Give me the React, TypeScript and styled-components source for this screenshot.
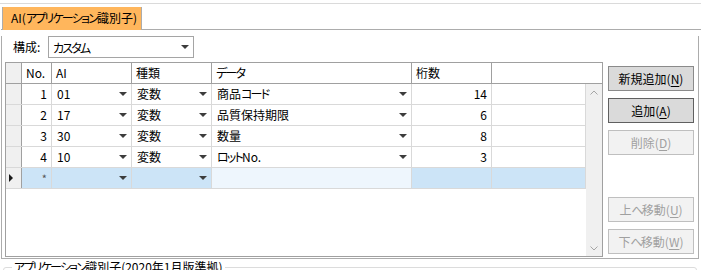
import React from "react";
import styled, { createGlobalStyle } from "styled-components";

const GlobalStyle = createGlobalStyle`
  html, body { margin: 0; padding: 0; background: #fff; }
  body {
    font-family: "Noto Sans CJK JP", "Noto Sans", sans-serif;
    font-size: 12px;
    color: #000;
    font-feature-settings: "palt";
  }
  * { box-sizing: border-box; }
`;

const Root = styled.div`
  width: 701px;
  height: 270px;
  overflow: hidden;
  background: #fff;
`;

const TopRule = styled.div`
  margin-top: 3px;
  height: 1px;
  background: #dadada;
`;

const TabStrip = styled.div`
  display: flex;
  margin-top: 3px;
  height: 23px;
  padding-left: 1px;
`;

const TabLead = styled.div`
  width: 1px;
  border-bottom: 1px solid #acacac;
`;

const Tab = styled.div`
  width: 140px;
  height: 23px;
  background: #ffb65c;
  border-left: 1px solid #acacac;
  border-right: 1px solid #acacac;
  padding-left: 8px;
  line-height: 22px;
  white-space: nowrap;
`;

const TabFill = styled.div`
  flex: 1;
  border-bottom: 1px solid #acacac;
`;

const Panel = styled.div`
  margin-left: 1px;
  width: 698px;
  border-left: 1px solid #acacac;
  border-right: 1px solid #acacac;
  border-bottom: 1px solid #acacac;
  padding-bottom: 1px;
`;

const ConfigRow = styled.div`
  display: flex;
  align-items: center;
  margin-top: 6px;
  height: 22px;
  padding-left: 11px;
`;

const ConfigLabel = styled.span`
  width: 35px;
  line-height: 22px;
`;

const Combo = styled.div`
  width: 146px;
  height: 22px;
  border: 1px solid #a5a5a5;
  display: flex;
  align-items: center;
  justify-content: space-between;
  padding: 0 4px 0 4px;
`;

const DropArrow = styled.span`
  width: 0;
  height: 0;
  border-left: 4px solid transparent;
  border-right: 4px solid transparent;
  border-top: 4px solid #3c3c3c;
`;

const Main = styled.div`
  display: flex;
  gap: 5px;
  margin-top: 4px;
  padding-left: 3px;
`;

const Grid = styled.div`
  width: 598px;
  height: 195px;
  border: 1px solid #a0a0a0;
  display: flex;
  flex-direction: column;
`;

const HeaderRow = styled.div`
  display: flex;
  height: 21px;
  border-bottom: 1px solid #a0a0a0;
`;

const Corner = styled.div`
  width: 16px;
  background: #f0f0f0;
  border-right: 1px solid #a0a0a0;
`;

const HeadCell = styled.div<{ $w: number; $last?: boolean }>`
  width: ${(p) => p.$w}px;
  border-right: ${(p) => (p.$last ? "none" : "1px solid #a0a0a0")};
  padding-left: 4px;
  line-height: 20px;
  white-space: nowrap;
`;

const Body = styled.div`
  flex: 1;
  display: flex;
`;

const Rows = styled.div`
  width: 580px;
  display: flex;
  flex-direction: column;
`;

const Row = styled.div`
  display: flex;
  height: 21px;
  border-bottom: 1px solid #d9d9d9;
`;

const RowHead = styled.div`
  width: 16px;
  background: #f0f0f0;
  border-right: 1px solid #a0a0a0;
  display: flex;
  align-items: center;
  padding-left: 3px;
`;

const CurrentMark = styled.span`
  width: 0;
  height: 0;
  border-top: 4px solid transparent;
  border-bottom: 4px solid transparent;
  border-left: 4px solid #1a1a1a;
`;

const Cell = styled.div<{
  $w: number;
  $align?: "left" | "right";
  $tone?: "plain" | "sel" | "edit";
}>`
  width: ${(p) => p.$w}px;
  border-right: 1px solid #d9d9d9;
  display: flex;
  align-items: center;
  justify-content: ${(p) => (p.$align === "right" ? "flex-end" : "space-between")};
  padding: 0 4px 0 5px;
  line-height: 20px;
  white-space: nowrap;
  background: ${(p) =>
    p.$tone === "sel" ? "#cce4f7" : p.$tone === "edit" ? "#eef6fd" : "#fff"};
`;

const Star = styled.span`
  color: #555;
  font-size: 11px;
`;

const VScroll = styled.div`
  width: 16px;
  margin-left: auto;
  background: #f0f0f0;
  display: flex;
  flex-direction: column;
  justify-content: space-between;
  align-items: center;
  padding: 6px 0 5px;
`;

const Buttons = styled.div`
  width: 86px;
  height: 195px;
  display: flex;
  flex-direction: column;
  gap: 7px;
  padding: 4px 0 3px;
`;

const BottomGroup = styled.div`
  margin-top: auto;
  display: flex;
  flex-direction: column;
  gap: 7px;
`;

const Btn = styled.div<{ $state: "normal" | "focus" | "disabled" }>`
  height: 25px;
  display: flex;
  align-items: center;
  justify-content: center;
  background: ${(p) => (p.$state === "disabled" ? "#f2f2f2" : "#dadada")};
  border: 1px solid
    ${(p) =>
      p.$state === "disabled" ? "#bfbfbf" : p.$state === "focus" ? "#606060" : "#8a8a8a"};
  color: ${(p) => (p.$state === "disabled" ? "#a0a0a0" : "#000")};
  white-space: nowrap;
`;

const Key = styled.span`
  text-decoration: underline;
  text-underline-offset: 2px;
`;

const Group = styled.fieldset`
  margin: 0 4px 0 3px;
  padding: 0 0 0 8px;
  border: 1px solid #dcdcdc;
  border-radius: 3px;
  height: 40px;
`;

const GroupTitle = styled.legend`
  padding: 0 2px;
  line-height: 16px;
  font-size: 12px;
`;

/* kana in the reference UI font are condensed; narrow them here */
const KanaRun = styled.span`
  letter-spacing: -1.8px;
`;

const Jp = ({ children }: { children: string }) => {
  const parts = children.split(/([\u3040-\u30ff]+)/).filter((s) => s.length > 0);
  return (
    <>
      {parts.map((s, i) =>
        /[\u3040-\u30ff]/.test(s) ? <KanaRun key={i}>{s}</KanaRun> : <span key={i}>{s}</span>
      )}
    </>
  );
};

const Chevron = ({ up }: { up?: boolean }) => (
  <svg width="8" height="5" viewBox="0 0 8 5">
    <polyline
      points={up ? "0.5,4.5 4,1 7.5,4.5" : "0.5,0.5 4,4 7.5,0.5"}
      fill="none"
      stroke="#a6a6a6"
      strokeWidth="1"
    />
  </svg>
);

const data = [
  { no: 1, ai: "01", kind: "変数", name: "商品コード", digits: 14 },
  { no: 2, ai: "17", kind: "変数", name: "品質保持期限", digits: 6 },
  { no: 3, ai: "30", kind: "変数", name: "数量", digits: 8 },
  { no: 4, ai: "10", kind: "変数", name: "ロットNo.", digits: 3 },
];

const Label = ({ text, k }: { text: string; k: string }) => (
  <span>
    {text}(<Key>{k}</Key>)
  </span>
);

export default function App() {
  return (
    <Root>
      <GlobalStyle />
      <TopRule />
      <TabStrip>
        <TabLead />
        <Tab>
          <Jp>AI(アプリケーション識別子)</Jp>
        </Tab>
        <TabFill />
      </TabStrip>
      <Panel>
        <ConfigRow>
          <ConfigLabel>構成:</ConfigLabel>
          <Combo>
            <span>
              <Jp>カスタム</Jp>
            </span>
            <DropArrow />
          </Combo>
        </ConfigRow>
        <Main>
          <Grid>
            <HeaderRow>
              <Corner />
              <HeadCell $w={30}>No.</HeadCell>
              <HeadCell $w={80}>AI</HeadCell>
              <HeadCell $w={80}>種類</HeadCell>
              <HeadCell $w={200}>
                <Jp>データ</Jp>
              </HeadCell>
              <HeadCell $w={80}>桁数</HeadCell>
              <HeadCell $w={110} $last />
            </HeaderRow>
            <Body>
              <Rows>
                {data.map((r) => (
                  <Row key={r.no}>
                    <RowHead />
                    <Cell $w={30} $align="right">{r.no}</Cell>
                    <Cell $w={80}>
                      <span>{r.ai}</span>
                      <DropArrow />
                    </Cell>
                    <Cell $w={80}>
                      <span>{r.kind}</span>
                      <DropArrow />
                    </Cell>
                    <Cell $w={200}>
                      <span>
                        <Jp>{r.name}</Jp>
                      </span>
                      <DropArrow />
                    </Cell>
                    <Cell $w={80} $align="right">{r.digits}</Cell>
                    <Cell $w={94} />
                  </Row>
                ))}
                <Row>
                  <RowHead>
                    <CurrentMark />
                  </RowHead>
                  <Cell $w={30} $align="right" $tone="sel">
                    <Star>*</Star>
                  </Cell>
                  <Cell $w={80} $tone="sel">
                    <span />
                    <DropArrow />
                  </Cell>
                  <Cell $w={80} $tone="sel">
                    <span />
                    <DropArrow />
                  </Cell>
                  <Cell $w={200} $tone="edit" />
                  <Cell $w={80} $tone="sel" />
                  <Cell $w={94} $tone="sel" />
                </Row>
              </Rows>
              <VScroll>
                <Chevron up />
                <Chevron />
              </VScroll>
            </Body>
          </Grid>
          <Buttons>
            <Btn $state="normal">
              <Label text="新規追加" k="N" />
            </Btn>
            <Btn $state="focus">
              <Label text="追加" k="A" />
            </Btn>
            <Btn $state="disabled">
              <Label text="削除" k="D" />
            </Btn>
            <BottomGroup>
              <Btn $state="disabled">
                <span>
                  上<KanaRun>へ</KanaRun>移動(<Key>U</Key>)
                </span>
              </Btn>
              <Btn $state="disabled">
                <span>
                  下<KanaRun>へ</KanaRun>移動(<Key>W</Key>)
                </span>
              </Btn>
            </BottomGroup>
          </Buttons>
        </Main>
      </Panel>
      <Group>
        <GroupTitle>
          <Jp>アプリケーション識別子(2020年1月版準拠)</Jp>
        </GroupTitle>
      </Group>
    </Root>
  );
}
